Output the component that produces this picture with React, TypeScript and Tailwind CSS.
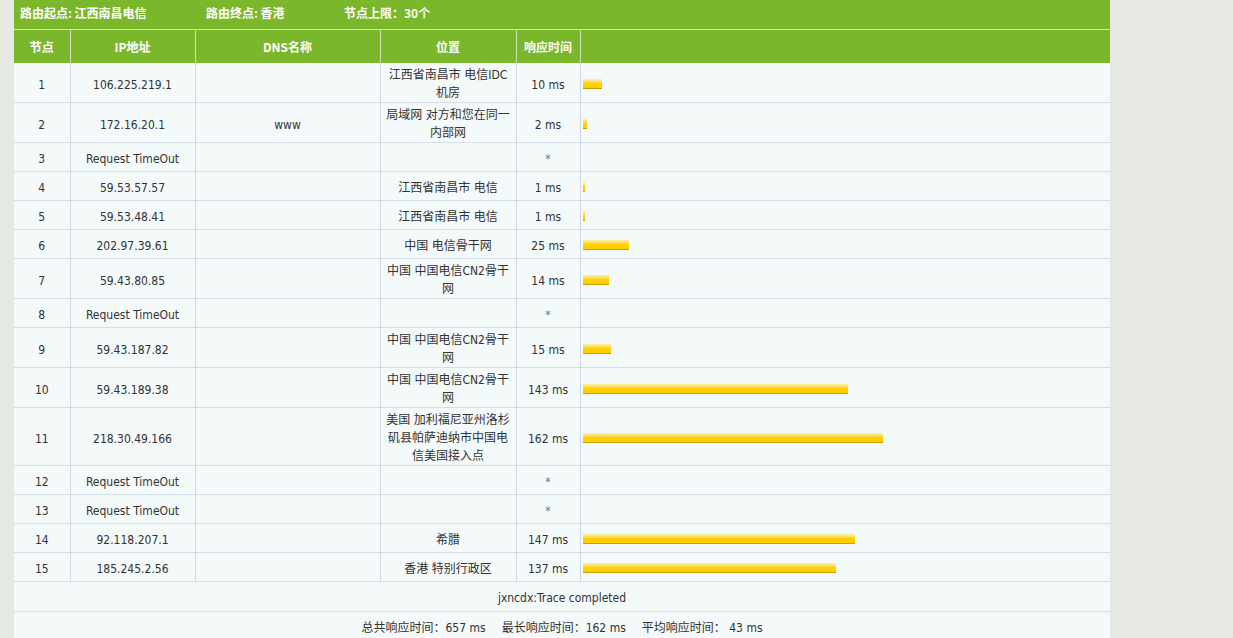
import React from "react";

type Hop = {
  no: number;
  ip: string;
  dns?: string;
  loc?: string;
  ms?: number;
};

const hops: Hop[] = [
  { no: 1, ip: "106.225.219.1", loc: "江西省南昌市 电信IDC机房", ms: 10 },
  { no: 2, ip: "172.16.20.1", dns: "www", loc: "局域网 对方和您在同一内部网", ms: 2 },
  { no: 3, ip: "Request TimeOut" },
  { no: 4, ip: "59.53.57.57", loc: "江西省南昌市 电信", ms: 1 },
  { no: 5, ip: "59.53.48.41", loc: "江西省南昌市 电信", ms: 1 },
  { no: 6, ip: "202.97.39.61", loc: "中国 电信骨干网", ms: 25 },
  { no: 7, ip: "59.43.80.85", loc: "中国 中国电信CN2骨干网", ms: 14 },
  { no: 8, ip: "Request TimeOut" },
  { no: 9, ip: "59.43.187.82", loc: "中国 中国电信CN2骨干网", ms: 15 },
  { no: 10, ip: "59.43.189.38", loc: "中国 中国电信CN2骨干网", ms: 143 },
  { no: 11, ip: "218.30.49.166", loc: "美国 加利福尼亚州洛杉矶县帕萨迪纳市中国电信美国接入点", ms: 162 },
  { no: 12, ip: "Request TimeOut" },
  { no: 13, ip: "Request TimeOut" },
  { no: 14, ip: "92.118.207.1", loc: "希腊", ms: 147 },
  { no: 15, ip: "185.245.2.56", loc: "香港 特别行政区", ms: 137 },
];

const font = "font-['DejaVu_Sans_Condensed','Liberation_Sans','Noto_Sans_CJK_SC',sans-serif]";

export default function App() {
  return (
    <div className={`min-h-screen bg-[#e6e8e4] pl-[14px] ${font} text-[12px] text-[#333]`}>
      <div className="w-[1096px]">
        {/* 顶部信息 */}
        <div className="flex h-[30px] items-center bg-[#7ab72b] pl-[6px] pb-[3px] font-bold text-white border-b border-[#d3e6bf] font-['Noto_Sans_CJK_SC',sans-serif]">
          <span className="w-[186px]">路由起点: 江西南昌电信</span>
          <span className="w-[138px]">路由终点: 香港</span>
          <span>节点上限：30个</span>
        </div>

        <table className="w-full table-fixed border-collapse bg-[#f4f9fa]">
          <colgroup>
            <col className="w-[56px]" />
            <col className="w-[125px]" />
            <col className="w-[185px]" />
            <col className="w-[136px]" />
            <col className="w-[64px]" />
            <col />
          </colgroup>
          <thead>
            <tr className="h-[33px] bg-[#7ab72b] text-white font-['Noto_Sans_CJK_SC',sans-serif]">
              <th className="border-r border-[#cfe3b9] font-bold">节点</th>
              <th className="border-r border-[#cfe3b9] font-bold">IP地址</th>
              <th className="border-r border-[#cfe3b9] font-bold">DNS名称</th>
              <th className="border-r border-[#cfe3b9] font-bold">位置</th>
              <th className="border-r border-[#cfe3b9] font-bold">响应时间</th>
              <th></th>
            </tr>
          </thead>
          <tbody>
            {hops.map((h) => (
              <tr key={h.no} className="h-[29px] border-b border-[#d5dde8]">
                <td className="border-r border-[#d0d7e6] px-1 pt-[4px] text-center leading-[18px]">{h.no}</td>
                <td className="border-r border-[#d0d7e6] px-1 pt-[4px] text-center leading-[18px]">{h.ip}</td>
                <td className="border-r border-[#d0d7e6] px-1 pt-[4px] text-center leading-[18px]">{h.dns ?? ""}</td>
                <td className="border-r border-[#d0d7e6] px-1 pt-[3px] pb-0 text-center leading-[18px]">{h.loc ?? ""}</td>
                <td className="border-r border-[#d0d7e6] px-1 pt-[4px] text-center leading-[18px]">
                  {h.ms !== undefined ? `${h.ms} ms` : <span className="text-[#777]">*</span>}
                </td>
                <td className="pl-[2px] pt-[2px]">
                  {h.ms !== undefined && (
                    <div
                      className="h-[10px] border-b border-[#c9a200] bg-gradient-to-b from-[#fff0a0] via-[#ffd000] to-[#ffcc00]"
                      style={{ width: Math.max(2, Math.round(h.ms * 1.85)) }}
                    />
                  )}
                </td>
              </tr>
            ))}
            <tr className="h-[30px] border-b border-[#d5dde8]">
              <td colSpan={6} className="pt-[2px] text-center">jxncdx:Trace completed</td>
            </tr>
            <tr className="h-[30px]">
              <td colSpan={6} className="pt-[2px] text-center">
                总共响应时间：657 ms<span className="inline-block w-[16px]" />最长响应时间：162 ms
                <span className="inline-block w-[16px]" />平均响应时间：&nbsp;43 ms
              </td>
            </tr>
          </tbody>
        </table>
      </div>
    </div>
  );
}
